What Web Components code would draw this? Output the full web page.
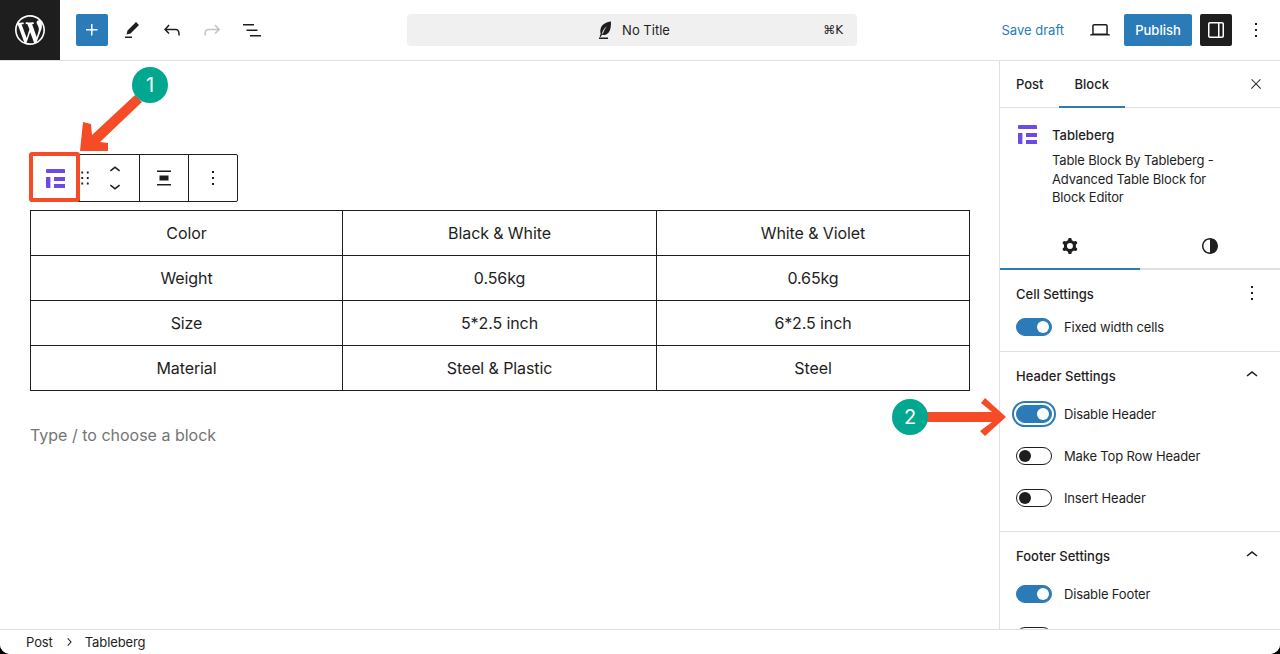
<!DOCTYPE html>
<html lang="en">
<head>
<meta charset="utf-8">
<title>No Title</title>
<style>
  html, body { margin: 0; height: 100%; background: #000; overflow: hidden; }
  body { font: 13px Inter, "Liberation Sans", sans-serif; color: #1e1e1e; }
</style>
</head>
<body>
<editor-app>
  <editor-topbar slot="top"></editor-topbar>
  <editor-canvas slot="main">
    <block-toolbar></block-toolbar>
    <data-table></data-table>
  </editor-canvas>
  <settings-sidebar slot="side">
    <settings-panel heading="Cell Settings" menu style="--row-gap-top:0px;--panel-bottom:15px">
      <toggle-row checked>Fixed width cells</toggle-row>
    </settings-panel>
    <settings-panel heading="Header Settings" chevron>
      <toggle-row checked focused>Disable Header</toggle-row>
      <toggle-row>Make Top Row Header</toggle-row>
      <toggle-row>Insert Header</toggle-row>
    </settings-panel>
    <settings-panel heading="Footer Settings" chevron>
      <toggle-row checked>Disable Footer</toggle-row>
      <toggle-row></toggle-row>
    </settings-panel>
  </settings-sidebar>
  <editor-statusbar slot="bottom"></editor-statusbar>
  <guide-marks slot="over"></guide-marks>
</editor-app>

<script>
const ICONS = {
  plus: 'M11 12.5V17.5H12.5V12.5H17.5V11H12.5V6H11V11H6V12.5H11Z',
  tools: 'm19 7-3-3-8.5 8.5-1 4 4-1L19 7Zm-7 11.5H5V20h7v-1.5Z',
  undo: 'M18.3 11.7c-.6-.6-1.4-.9-2.3-.9H6.7l2.9-3.3-1.1-1-4.5 5L8.5 16l1-1-2.7-2.7H16c.5 0 .9.2 1.3.5 1 1 1 3.4 1 4.5v.3h1.5v-.2c0-1.5 0-4.3-1.5-5.7z',
  redo: 'M15.6 6.5l-1.1 1 2.9 3.3H8c-.9 0-1.7.3-2.3.9-1.4 1.5-1.4 4.2-1.4 5.6v.2h1.5v-.3c0-1.1 0-3.5 1-4.5.3-.3.7-.5 1.3-.5h9.2L14.5 15l1.1 1.1 4.6-4.6-4.6-5z',
  list: 'M3 6h11v1.5H3V6Zm3.5 5.5h11V13h-11v-1.5ZM21 17H10v1.5h11V17Z',
  laptop: 'M20.5 16h-.7V8c0-1.1-.9-2-2-2H6.2c-1.1 0-2 .9-2 2v8h-.7c-.8 0-1.5.7-1.5 1.5h20c0-.8-.7-1.5-1.5-1.5zM5.7 8c0-.3.2-.5.5-.5h11.6c.3 0 .5.2.5.5v7.6H5.7V8z',
  sidebar: 'M18 4H6c-1.1 0-2 .9-2 2v12c0 1.1.9 2 2 2h12c1.1 0 2-.9 2-2V6c0-1.1-.9-2-2-2zm-4 14.5H6c-.3 0-.5-.2-.5-.5V6c0-.3.2-.5.5-.5h8v13zm4.5-.5c0 .3-.2.5-.5.5h-2.5v-13H18c.3 0 .5.2.5.5v12z',
  more: 'M13 19h-2v-2h2v2zm0-6h-2v-2h2v2zm0-6h-2V5h2v2z',
  close: 'M13 11.8l6.1-6.3-1-1-6.1 6.2-6.1-6.2-1 1 6.1 6.3-6.5 6.7 1 1 6.5-6.6 6.5 6.6 1-1z',
  up: 'M6.5 12.4L12 8l5.5 4.4-.9 1.2L12 10l-4.5 3.6-1-1.2z',
  down: 'M17.5 11.6L12 16l-5.5-4.4.9-1.2L12 14l4.5-3.6 1 1.2z',
  right: 'M10.6 6L9.500 7l4.600 5-4.600 5 1.100 1 5.500-6-5.500-6z',
  cog: 'M10.289 4.836A1 1 0 0111.275 4h1.306a1 1 0 01.987.836l.244 1.466c.787.26 1.503.679 2.108 1.218l1.393-.522a1 1 0 011.216.437l.653 1.13a1 1 0 01-.23 1.273l-1.148.944a6.025 6.025 0 010 2.435l1.149.946a1 1 0 01.23 1.272l-.653 1.13a1 1 0 01-1.216.437l-1.394-.522c-.605.54-1.32.958-2.108 1.218l-.244 1.466a1 1 0 01-.987.836h-1.306a1 1 0 01-.986-.836l-.244-1.466a5.995 5.995 0 01-2.108-1.218l-1.394.522a1 1 0 01-1.217-.436l-.653-1.131a1 1 0 01.23-1.272l1.149-.946a6.026 6.026 0 010-2.435l-1.148-.944a1 1 0 01-.23-1.272l.653-1.131a1 1 0 011.217-.437l1.393.522a5.994 5.994 0 012.108-1.218l.244-1.466zM14.929 12a3 3 0 11-6 0 3 3 0 016 0z',
  styles: 'M12 4c-4.4 0-8 3.6-8 8s3.6 8 8 8 8-3.6 8-8-3.6-8-8-8zm0 14.5c-3.6 0-6.5-2.9-6.5-6.5S8.4 5.5 12 5.5v13z',
  drag: 'M8 7h2V5H8v2zm0 6h2v-2H8v2zm0 6h2v-2H8v2zm6-14v2h2V5h-2zm0 8h2v-2h-2v2zm0 6h2v-2h-2v2z',
  align: 'M5 4.5h14V6H5zM7.5 9.5h9v5h-9zM5 18h14v1.5H5z',
  feather: 'M18 3.5c-5.2.6-9.2 2.8-10.4 7.3-.5 1.9-.3 3.7.1 5L6.6 18.6l1.2.5 1-2.3c2.6.5 5.2-.3 6.9-2.4 1.9-2.4 2.4-6.6 2.3-11zM9 15.6c.6-3 2.300-5.300 5-7.300-1.900 2.300-3.300 4.600-4 7.500zM6 19.500h9V21H6z',
  tableberg: 'M1 0h17a1 1 0 0 1 1 1v3H1a1 1 0 0 1-1-1V1a1 1 0 0 1 1-1zM0 8h4.400v11H1a1 1 0 0 1-1-1zM8 8h11v4H8zM8 15h11v4H8z'
};

class WpIcon extends HTMLElement {
  constructor() {
    super();
    const size = this.getAttribute('size') || 24;
    const name = this.getAttribute('name');
    const box = name === 'tableberg' ? '0 0 19 19' : '0 0 24 24';
    this.attachShadow({ mode: 'open' }).innerHTML = `
      <style>
        :host { display: inline-flex; width: ${size}px; height: ${size}px; flex: none; }
        svg { display: block; width: 100%; height: 100%; fill: currentColor; }
      </style>
      <svg viewBox="${box}" aria-hidden="true"><path fill-rule="evenodd" d="${ICONS[name]}"/></svg>`;
  }
}
customElements.define('wp-icon', WpIcon);

class EditorApp extends HTMLElement {
  constructor() {
    super();
    this.attachShadow({ mode: 'open' }).innerHTML = `
      <style>
        :host { display: block; position: relative; width: 1280px; height: 654px; overflow: hidden;
                background: #fff; border-radius: 0 0 10px 10px; }
        .frame { display: flex; flex-direction: column; height: 100%; }
        .body { display: flex; flex: 1; min-height: 0; }
      </style>
      <div class="frame">
        <slot name="top"></slot>
        <div class="body"><slot name="main"></slot><slot name="side"></slot></div>
        <slot name="bottom"></slot>
      </div>
      <slot name="over"></slot>`;
  }
}
customElements.define('editor-app', EditorApp);

class EditorTopbar extends HTMLElement {
  constructor() {
    super();
    this.attachShadow({ mode: 'open' }).innerHTML = `
      <style>
        :host { display: flex; align-items: center; height: 60px; border-bottom: 1px solid #e0e0e0; flex: none; color: #1e1e1e; }
        .logo { width: 60px; height: 60px; background: #1e1e1e; color: #fff; display: flex; align-items: center; justify-content: center; }
        .logo svg { width: 36px; height: 36px; fill: currentColor; }
        .left { display: flex; align-items: center; margin-left: 16px; }
        .btn { width: 40px; height: 32px; display: flex; align-items: center; justify-content: center; }
        .plus { width: 32px; background: #2b7bb9; color: #fff; border-radius: 2px; margin-right: 4px; }
        .off { color: #c4c4c4; }
        .command { width: 450px; height: 32px; margin-left: 135px; background: #f0f0f0; border-radius: 4px;
                   position: relative; display: flex; align-items: center; justify-content: center; gap: 5px; padding-left: 3px; box-sizing: border-box; }
        .command wp-icon { margin-left: -4px; }
        kbd { position: absolute; right: 14px; font: inherit; font-family: "DejaVu Sans", Inter, sans-serif; font-size: 12px; }
        .right { margin-left: auto; display: flex; align-items: center; padding-right: 8px; }
        .save { color: #2b7bb9; margin-right: 24px; }
        .laptop { margin-right: 12px; }
        .publish { width: 68px; height: 32px; background: #2b7bb9; color: #fff; border-radius: 2px; font-weight: 500;
                   display: flex; align-items: center; justify-content: center; margin-right: 8px; }
        .panel { width: 32px; height: 32px; background: #1e1e1e; color: #fff; border-radius: 2px; margin-right: 8px;
                 display: flex; align-items: center; justify-content: center; }
        .kebab { width: 32px; height: 32px; display: flex; align-items: center; justify-content: center; }
      </style>
      <div class="logo"><svg viewBox="-2 -2 24 24"><path d="M20 10c0-5.51-4.49-10-10-10C4.48 0 0 4.49 0 10c0 5.52 4.48 10 10 10 5.51 0 10-4.48 10-10zM7.780 15.370L4.370 6.220c.550-.020 1.170-.080 1.170-.080.500-.060.440-1.130-.060-1.110 0 0-1.450.110-2.370.110-.180 0-.370 0-.580-.010C4.120 2.690 6.870 1.110 10 1.110c2.330 0 4.450.870 6.050 2.340-.680-.110-1.650.390-1.650 1.580 0 .740.450 1.360.900 2.100.350.610.550 1.360.550 2.460 0 1.490-1.400 5-1.400 5l-3.030-8.370c.540-.020.820-.170.820-.170.500-.050.440-1.250-.060-1.220 0 0-1.440.120-2.380.120-.870 0-2.330-.120-2.330-.120-.500-.030-.560 1.200-.060 1.220l.920.080 1.260 3.410zM17.410 10c.240-.640.740-1.870.430-4.250.700 1.290 1.050 2.710 1.050 4.250 0 3.290-1.730 6.240-4.400 7.780.970-2.590 1.940-5.200 2.920-7.780zM6.100 18.090C3.120 16.650 1.110 13.530 1.110 10c0-1.300.230-2.480.720-3.590C3.250 10.300 4.670 14.200 6.100 18.090zm4.030-6.630l2.580 6.980c-.860.290-1.760.450-2.710.450-.790 0-1.570-.110-2.290-.330.810-2.380 1.620-4.740 2.420-7.100z"/></svg></div>
      <div class="left">
        <div class="btn plus"><wp-icon name="plus"></wp-icon></div>
        <div class="btn"><wp-icon name="tools"></wp-icon></div>
        <div class="btn"><wp-icon name="undo"></wp-icon></div>
        <div class="btn off"><wp-icon name="redo"></wp-icon></div>
        <div class="btn"><wp-icon name="list"></wp-icon></div>
      </div>
      <div class="command"><wp-icon name="feather"></wp-icon><span>No Title</span><kbd>⌘K</kbd></div>
      <div class="right">
        <span class="save">Save draft</span>
        <wp-icon class="laptop" name="laptop"></wp-icon>
        <div class="publish">Publish</div>
        <div class="panel"><wp-icon name="sidebar"></wp-icon></div>
        <div class="kebab"><wp-icon name="more"></wp-icon></div>
      </div>`;
  }
}
customElements.define('editor-topbar', EditorTopbar);

class EditorCanvas extends HTMLElement {
  constructor() {
    super();
    this.attachShadow({ mode: 'open' }).innerHTML = `
      <style>
        :host { display: block; width: 999px; flex: none; padding: 93px 0 0 30px; box-sizing: border-box; background: #fff; }
        .hint { margin-top: 34px; font-size: 16px; line-height: 20px; color: #757575; }
      </style>
      <slot></slot>
      <div class="hint">Type / to choose a block</div>`;
  }
}
customElements.define('editor-canvas', EditorCanvas);

class BlockToolbar extends HTMLElement {
  constructor() {
    super();
    this.attachShadow({ mode: 'open' }).innerHTML = `
      <style>
        :host { display: flex; width: 208px; height: 48px; box-sizing: border-box; border: 1px solid #1e1e1e; border-radius: 2px; color: #1e1e1e; margin-bottom: 8px; }
        .cell { display: flex; align-items: center; justify-content: center; border-right: 1px solid #1e1e1e; }
        .cell:last-child { border-right: 0; }
        .brand { width: 48px; color: #6c4ae8; }
        .move { width: 59px; justify-content: flex-start; }
        .move .grip { margin-left: -6px; }
        .stack { display: flex; flex-direction: column; margin-left: 8px; }
        .stack wp-icon { margin: -3px 0; }
        .align { width: 48px; }
        .dots { flex: 1; }
      </style>
      <div class="cell brand"><wp-icon name="tableberg" size="19"></wp-icon></div>
      <div class="cell move">
        <wp-icon class="grip" name="drag" size="22"></wp-icon>
        <div class="stack"><wp-icon name="up" size="22"></wp-icon><wp-icon name="down" size="22"></wp-icon></div>
      </div>
      <div class="cell align"><wp-icon name="align"></wp-icon></div>
      <div class="cell dots"><wp-icon name="more"></wp-icon></div>`;
  }
}
customElements.define('block-toolbar', BlockToolbar);

class DataTable extends HTMLElement {
  constructor() {
    super();
    const rows = [
      ['Color', 'Black &amp; White', 'White &amp; Violet'],
      ['Weight', '0.56kg', '0.65kg'],
      ['Size', '5*2.5 inch', '6*2.5 inch'],
      ['Material', 'Steel &amp; Plastic', 'Steel']
    ];
    const body = rows.map((r) => `<tr>${r.map((c) => `<td>${c}</td>`).join('')}</tr>`).join('');
    this.attachShadow({ mode: 'open' }).innerHTML = `
      <style>
        :host { display: block; width: 940px; }
        table { width: 940px; table-layout: fixed; border-collapse: collapse; font-size: 16px; color: #1e1e1e; letter-spacing: -.1px; }
        col.a { width: 312px; } col.b { width: 314px; }
        td { height: 45px; box-sizing: border-box; padding: 0; border: 1px solid #1e1e1e; text-align: center; }
      </style>
      <table><colgroup><col class="a"><col class="b"><col></colgroup><tbody>${body}</tbody></table>`;
  }
}
customElements.define('data-table', DataTable);

class SettingsSidebar extends HTMLElement {
  constructor() {
    super();
    this.attachShadow({ mode: 'open' }).innerHTML = `
      <style>
        :host { display: block; width: 281px; flex: none; border-left: 1px solid #e0e0e0; box-sizing: border-box; overflow: hidden; background: #fff; }
        .tabs { height: 46px; display: flex; align-items: center; border-bottom: 1px solid #e0e0e0; font-weight: 500; }
        .tab { height: 46px; display: flex; align-items: center; padding: 0 16px; position: relative; }
        .tab.on::after { content: ""; position: absolute; left: 0; right: 0; bottom: -1px; height: 2px; background: #2b7bb9; }
        .tabs wp-icon { margin-left: auto; margin-right: 16px; }
        .card { display: flex; gap: 15px; padding: 17px 16px 0 18px; height: 117px; box-sizing: border-box; }
        .card .brand { color: #6c4ae8; }
        .name { font-weight: 500; line-height: 20px; }
        .desc { line-height: 18.500px; margin-top: 6px; letter-spacing: -.15px; }
        .modes { height: 45px; display: grid; grid-template-columns: 140px 140px; }
        .modes div { display: flex; align-items: center; justify-content: center; border-bottom: 2px solid #e0e0e0; padding-bottom: 1px; }
        .modes .on { border-bottom-color: #2b7bb9; }
      </style>
      <div class="tabs">
        <div class="tab" style="padding-right:15px">Post</div>
        <div class="tab on">Block</div>
        <wp-icon name="close" size="16"></wp-icon>
      </div>
      <div class="card">
        <wp-icon class="brand" name="tableberg" size="19"></wp-icon>
        <div>
          <div class="name">Tableberg</div>
          <div class="desc">Table Block By Tableberg -<br>Advanced Table Block for<br>Block Editor</div>
        </div>
      </div>
      <div class="modes">
        <div class="on"><wp-icon name="cog"></wp-icon></div>
        <div><wp-icon name="styles"></wp-icon></div>
      </div>
      <slot></slot>`;
  }
}
customElements.define('settings-sidebar', SettingsSidebar);

class SettingsPanel extends HTMLElement {
  constructor() {
    super();
    let side = '';
    if (this.hasAttribute('menu')) side = '<wp-icon name="more"></wp-icon>';
    if (this.hasAttribute('chevron')) side = '<wp-icon name="up"></wp-icon>';
    this.attachShadow({ mode: 'open' }).innerHTML = `
      <style>
        :host { display: block; border-bottom: 1px solid #e0e0e0; padding-bottom: var(--panel-bottom, 24px); }
        .head { height: 48px; display: flex; align-items: center; justify-content: space-between; padding: 0 16px; font-weight: 500; }
        .head wp-icon { margin-top: -2px; }
        .rows { display: flex; flex-direction: column; gap: 24px; padding: var(--row-gap-top, 5px) 16px 0; }
      </style>
      <div class="head"><span>${this.getAttribute('heading')}</span>${side}</div>
      <div class="rows"><slot></slot></div>`;
  }
}
customElements.define('settings-panel', SettingsPanel);

class ToggleRow extends HTMLElement {
  constructor() {
    super();
    const on = this.hasAttribute('checked');
    const focus = this.hasAttribute('focused');
    this.attachShadow({ mode: 'open' }).innerHTML = `
      <style>
        :host { display: flex; align-items: center; gap: 12px; height: 18px; letter-spacing: -.15px; }
        .track { width: 36px; height: 18px; box-sizing: border-box; border-radius: 9px; position: relative; flex: none;
                 border: 1px solid #1e1e1e; background: #fff; }
        .track::after { content: ""; position: absolute; top: 2px; left: 2px; width: 12px; height: 12px; border-radius: 50%; background: #1e1e1e; }
        .track.on { background: #2b7bb9; border-color: #2b7bb9; }
        .track.on::after { left: auto; right: 2px; background: #fff; }
        .track.focus { box-shadow: 0 0 0 2px #fff, 0 0 0 4px #2b7bb9; }
      </style>
      <span class="track${on ? ' on' : ''}${focus ? ' focus' : ''}"></span>
      <span><slot></slot></span>`;
  }
}
customElements.define('toggle-row', ToggleRow);

class EditorStatusbar extends HTMLElement {
  constructor() {
    super();
    this.attachShadow({ mode: 'open' }).innerHTML = `
      <style>
        :host { display: flex; align-items: center; height: 25px; flex: none; box-sizing: border-box; border-top: 1px solid #e0e0e0;
                padding-left: 26px; background: #fff; position: relative; z-index: 1; letter-spacing: -.1px; }
        wp-icon { margin: 0 8px; }
      </style>
      <span>Post</span><wp-icon name="right" size="16"></wp-icon><span>Tableberg</span>`;
  }
}
customElements.define('editor-statusbar', EditorStatusbar);

// annotations drawn on top of the screenshot
class GuideMarks extends HTMLElement {
  constructor() {
    super();
    this.attachShadow({ mode: 'open' }).innerHTML = `
      <style>
        :host { position: absolute; inset: 0; display: block; pointer-events: none; }
        svg { position: absolute; inset: 0; width: 1280px; height: 654px; }
        .badge { position: absolute; width: 36px; height: 36px; border-radius: 50%; background: #01a88f; color: #fff;
                 display: flex; align-items: center; justify-content: center; font-size: 20px; }
        .box { position: absolute; left: 29px; top: 152px; width: 51px; height: 50px; box-sizing: border-box;
               border: 4px solid #f54b26; border-radius: 3px; }
      </style>
      <svg viewBox="0 0 1280 654" aria-hidden="true">
        <polygon fill="#f54b26" points="80,151 83,122 91,124 92,135 135,95 142,102 100,142 108,143 108,151"/>
        <polygon fill="#f54b26" points="925,412 992,412 981,403 985,398 1006,417 985,436 980,431 992,422 925,422"/>
      </svg>
      <div class="box"></div>
      <div class="badge" style="left:132px;top:67px">1</div>
      <div class="badge" style="left:892px;top:399px">2</div>`;
  }
}
customElements.define('guide-marks', GuideMarks);
</script>
</body>
</html>
